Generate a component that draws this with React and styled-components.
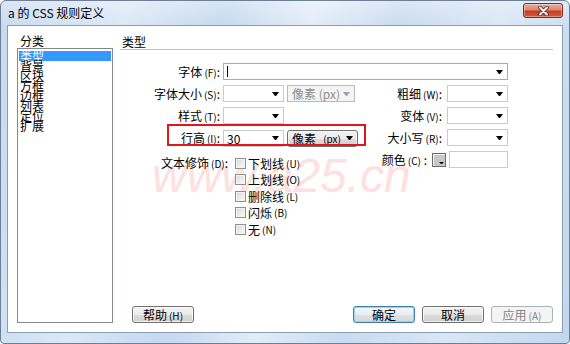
import React from 'react'
import styled, { createGlobalStyle } from 'styled-components'

const GlobalStyle = createGlobalStyle`
  html, body { margin: 0; padding: 0; background: #fff; }
  body {
    font-family: "Noto Sans CJK SC", "Liberation Sans", sans-serif;
    font-size: 12px;
    color: #000;
  }
  * { box-sizing: border-box; }
`

const categories = ['类型', '背景', '区块', '方框', '边框', '列表', '定位', '扩展']
const decorations = [
  ['下划线', 'U'],
  ['上划线', 'O'],
  ['删除线', 'L'],
  ['闪烁', 'B'],
  ['无', 'N'],
]

function App() {
  return (
    <>
      <GlobalStyle />
      <Window>
        <TitleBar>
          <Title>a 的 CSS 规则定义</Title>
          <CloseButton>
            <svg width="11" height="10" viewBox="0 0 11 10">
              <path d="M2 1.5 L9 8.5 M9 1.5 L2 8.5" stroke="#5a1f14" strokeWidth="3.6" strokeLinecap="round" />
              <path d="M2 1.5 L9 8.5 M9 1.5 L2 8.5" stroke="#fff" strokeWidth="2" strokeLinecap="round" />
            </svg>
          </CloseButton>
        </TitleBar>

        <Client>
          <Watermark>www.a25.cn</Watermark>

          <LeftColumn>
            <SmallTitle>分类</SmallTitle>
            <ListBox>
              {categories.map((c, i) => (
                <ListItem key={c} $selected={i === 0}>{c}</ListItem>
              ))}
            </ListBox>
          </LeftColumn>

          <RightPanel>
            <Heading>类型</Heading>

            <Form>
              <Label>字体<Key>(F)</Key>:</Label>
              <Combo $w={285} $focused style={{ gridColumn: '2 / 5' }}>
                <Caret />
                <Arrow />
              </Combo>

              <Label>字体大小<Key>(S)</Key>:</Label>
              <Controls>
                <Combo><span /><Arrow /></Combo>
                <UnitSelect $disabled $w={68}>像素 (px)<Arrow $gray /></UnitSelect>
              </Controls>
              <Label $pad={5}>粗细<Key>(W)</Key>:</Label>
              <Combo><span /><Arrow /></Combo>

              <Label>样式<Key>(T)</Key>:</Label>
              <Controls>
                <Combo><span /><Arrow /></Combo>
              </Controls>
              <Label $pad={5}>变体<Key>(V)</Key>:</Label>
              <Combo><span /><Arrow /></Combo>

              <Highlight>
                <Label>行高<Key>(I)</Key>:</Label>
                <Controls>
                  <Combo><span>30</span><Arrow /></Combo>
                  <UnitSelect $w={71}>像素<Key>(px)</Key><Arrow /></UnitSelect>
                </Controls>
              </Highlight>
              <Label $pad={5}>大小写<Key>(R)</Key>:</Label>
              <Combo><span /><Arrow /></Combo>

              <DecorationGroup>
                <DecorationLabel>文本修饰<Key>(D)</Key>:</DecorationLabel>
                <CheckList>
                  {decorations.map(([text, key]) => (
                    <CheckRow key={key}>
                      <CheckBox />
                      {text}<Key>({key})</Key>
                    </CheckRow>
                  ))}
                </CheckList>
              </DecorationGroup>
              <ColorCell>
                <span>颜色<Key>(C)</Key> :</span>
                <Swatch><SwatchArrow /></Swatch>
                <Combo $w={59}><span /></Combo>
              </ColorCell>
            </Form>

            <Footer>
              <Button>帮助<Key>(H)</Key></Button>
              <Button $default>确定</Button>
              <Button>取消</Button>
              <Button $disabled>应用<Key>(A)</Key></Button>
            </Footer>
          </RightPanel>
        </Client>
      </Window>
    </>
  )
}

export default App

const Window = styled.div`
  width: 570px;
  height: 344px;
  display: flex;
  flex-direction: column;
  border: 1px solid #6f8096;
  border-radius: 6px 6px 4px 4px;
  overflow: hidden;
  background:
    linear-gradient(180deg, rgba(255,255,255,0.35) 0%, rgba(255,255,255,0) 8%),
    linear-gradient(100deg, #c6daf0 0%, #dae7f6 20%, #c4d8ef 36%, #e2ecf8 50%, #c8dbf0 64%, #d9e6f5 80%, #c2d7ee 100%);
`

const TitleBar = styled.div`
  height: 24px;
  display: flex;
  justify-content: space-between;
  align-items: flex-start;
  padding-left: 7px;
`

const Title = styled.div`
  line-height: 24px;
  font-size: 12px;
  color: #000;
`

const CloseButton = styled.div`
  width: 40px;
  height: 15px;
  margin: 2px 6px 0 0;
  border: 1px solid #7a2e22;
  border-radius: 3px;
  display: flex;
  align-items: center;
  justify-content: center;
  background: linear-gradient(#eab0a2 0%, #dc8570 45%, #c63d22 55%, #d45a3a 100%);
  box-shadow: inset 0 0 0 1px rgba(255, 255, 255, 0.35);
`

const Client = styled.div`
  flex: 1;
  position: relative;
  display: flex;
  margin: 0 6px 10px 6px;
  padding: 8px 9px 9px 9px;
  background: #fff;
  border: 1px solid #8b9db3;
`

const Watermark = styled.div`
  position: absolute;
  left: 144px;
  top: 126px;
  font-family: "Liberation Sans", sans-serif;
  font-style: italic;
  font-size: 48px;
  line-height: 48px;
  color: #fde1e1;
  white-space: nowrap;
  pointer-events: none;
`

const LeftColumn = styled.div`
  width: 96px;
  display: flex;
  flex-direction: column;
  position: relative;
`

const SmallTitle = styled.div`
  line-height: 14px;
  padding-left: 3px;
`

const ListBox = styled.div`
  flex: 1;
  border: 1px solid #828790;
  padding: 2px 1px;
  background: #fff;
`

const ListItem = styled.div`
  line-height: 10px;
  height: 10px;
  padding-left: 1px;
  background: ${p => (p.$selected ? '#3399ff' : 'transparent')};
  color: ${p => (p.$selected ? '#fff' : '#000')};
`

const RightPanel = styled.div`
  flex: 1;
  margin-left: 7px;
  display: flex;
  flex-direction: column;
  position: relative;
`

const Heading = styled.div`
  line-height: 15px;
  padding-left: 2px;
  border-bottom: 1px solid #c2c2c2;
`

const Form = styled.div`
  margin-top: 13px;
  display: grid;
  grid-template-columns: 103px 142px 82px 61px;
  grid-template-rows: repeat(4, 22px) auto;
  align-items: start;
`

const Key = styled.span`
  font-size: 10px;
  margin-left: 2px;
`

const Label = styled.div`
  line-height: 17px;
  text-align: right;
  white-space: nowrap;
  padding-right: ${p => p.$pad ?? 3}px;
`

const Controls = styled.div`
  display: flex;
  align-items: center;
  gap: 3px;
`

const Combo = styled.div`
  width: ${p => p.$w || 61}px;
  height: 17px;
  display: flex;
  align-items: center;
  justify-content: space-between;
  padding: 0 4px 0 3px;
  background: #fff;
  border: 1px solid ${p => (p.$focused ? '#7eb4ea' : '#c8ccd2')};
  line-height: 15px;
`

const Caret = styled.span`
  width: 1px;
  height: 11px;
  background: #000;
`

const Arrow = styled.span`
  width: 1px;
  height: 0;
  border-left: 3px solid transparent;
  border-right: 3px solid transparent;
  border-top: 4px solid ${p => (p.$gray ? '#a0a0a0' : '#000')};
  box-sizing: content-box;
`

const UnitSelect = styled.div`
  width: ${p => p.$w}px;
  height: 17px;
  display: flex;
  align-items: center;
  justify-content: space-between;
  padding: 0 4px 0 4px;
  line-height: 15px;
  white-space: nowrap;
  border: 1px solid ${p => (p.$disabled ? '#b8bcc0' : '#707070')};
  border-radius: ${p => (p.$disabled ? 0 : 3)}px;
  color: ${p => (p.$disabled ? '#8d8d8d' : '#000')};
  background: ${p =>
    p.$disabled
      ? '#f4f4f4'
      : 'linear-gradient(#f2f2f2 0%, #ebebeb 50%, #dddddd 51%, #cfcfcf 100%)'};
  box-shadow: ${p => (p.$disabled ? 'none' : 'inset 0 0 0 1px rgba(255,255,255,0.6)')};
`

const Highlight = styled.div`
  grid-column: 1 / 3;
  position: relative;
  display: grid;
  grid-template-columns: 103px 142px;

  &::after {
    content: '';
    position: absolute;
    left: 47px;
    right: -1px;
    top: -5px;
    bottom: 1px;
    border: 2px solid #e4161d;
    pointer-events: none;
  }
`

const DecorationGroup = styled.div`
  grid-column: 1 / 3;
  display: flex;
  align-items: flex-start;
`

const DecorationLabel = styled.div`
  width: 111px;
  text-align: right;
  padding-right: 3px;
  margin-top: 4px;
  line-height: 16.5px;
  white-space: nowrap;
`

const CheckList = styled.div`
  margin-left: 4px;
  padding-top: 4px;
  display: flex;
  flex-direction: column;
`

const CheckRow = styled.div`
  height: 16.5px;
  display: flex;
  align-items: center;
  white-space: nowrap;
`

const CheckBox = styled.span`
  width: 11px;
  height: 11px;
  margin-right: 2px;
  border: 1px solid #8e8f8f;
  background: linear-gradient(135deg, #d6d6d6 0%, #eeeeee 60%, #f8f8f8 100%);
  box-shadow: inset 0 0 0 1px #f4f4f4;
`

const ColorCell = styled.div`
  grid-column: 3 / 5;
  height: 17px;
  display: flex;
  align-items: center;
  justify-content: flex-end;
  gap: 3px;
  white-space: nowrap;

  & > span:first-child {
    margin-right: 2px;
  }
`

const Swatch = styled.div`
  width: 14px;
  height: 14px;
  border: 1px solid #6b6b6b;
  background: #c8c8c8;
  box-shadow: inset 1px 1px 0 #f4f4f4;
  display: flex;
  align-items: flex-end;
  justify-content: flex-end;
  padding: 0 1px 2px 0;
`

const SwatchArrow = styled.span`
  width: 1px;
  height: 0;
  border-left: 2px solid transparent;
  border-right: 2px solid transparent;
  border-top: 2px solid #000;
  box-sizing: content-box;
`

const Footer = styled.div`
  margin-top: auto;
  display: flex;
  column-gap: 7px;
  padding-left: 12px;

  & > :first-child {
    margin-right: auto;
  }
`

const Button = styled.button`
  width: 62px;
  height: 17px;
  padding: 0;
  font-family: inherit;
  font-size: 12px;
  line-height: 15px;
  border-radius: 3px;
  border: 1px solid ${p => (p.$default ? '#3c7fb1' : p.$disabled ? '#adb2b5' : '#707070')};
  color: ${p => (p.$disabled ? '#838383' : '#000')};
  background: ${p =>
    p.$disabled
      ? '#f4f4f4'
      : p.$default
      ? 'linear-gradient(#f4f8fb 0%, #e9eef2 50%, #dbe1e6 51%, #d2d8de 100%)'
      : 'linear-gradient(#f2f2f2 0%, #ebebeb 50%, #dddddd 51%, #cfcfcf 100%)'};
  box-shadow: ${p =>
    p.$disabled ? 'none' : p.$default ? 'inset 0 0 0 1px #9ad4f5' : 'inset 0 0 0 1px rgba(255,255,255,0.7)'};
`
